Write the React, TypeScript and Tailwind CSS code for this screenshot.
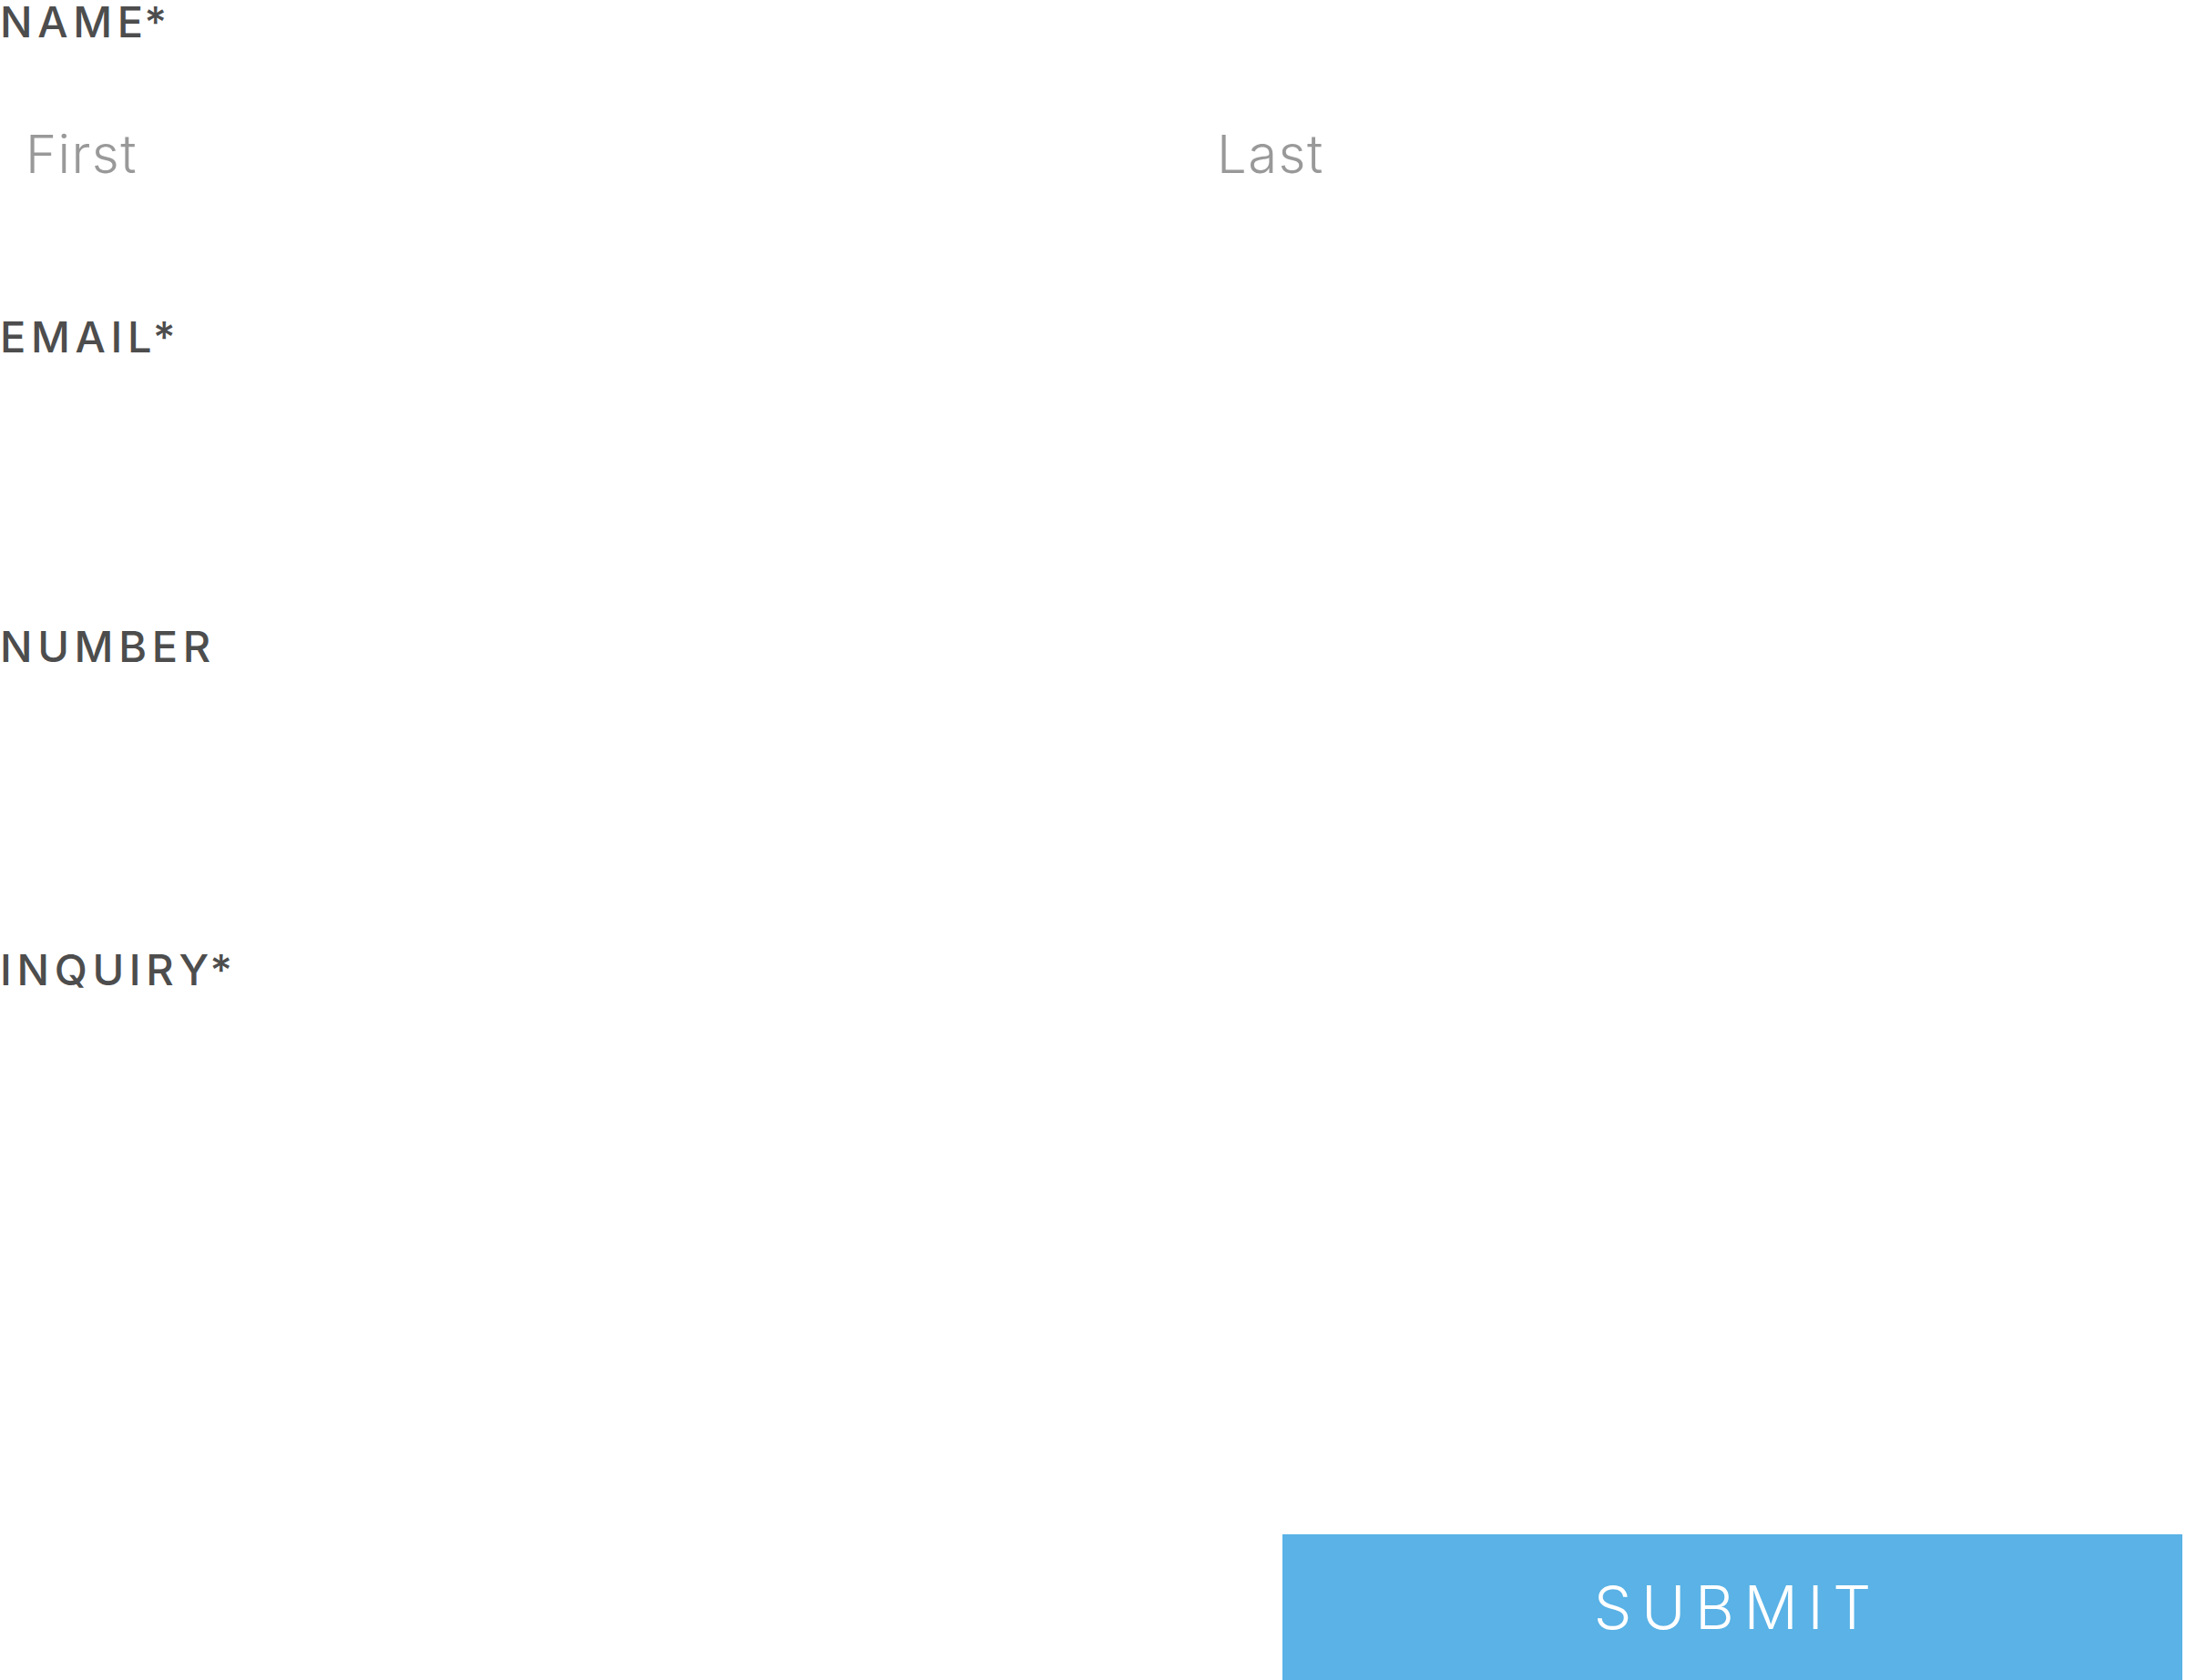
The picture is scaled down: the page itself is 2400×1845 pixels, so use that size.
import React from "react";

const labelCls =
  "block h-[47px] text-[47px] leading-[47px] font-medium tracking-[0.12em] text-[#4d4d4d] uppercase whitespace-nowrap";
const inputCls =
  "w-full bg-transparent outline-none border-0 pl-[28px] text-[58px] font-light text-[#555] placeholder:text-[#999] tracking-[0.025em]";

function Label({ text, required }: { text: string; required?: boolean }) {
  if (!required) return <label className={labelCls}>{text}</label>;
  const head = text.slice(0, -1);
  const last = text.slice(-1);
  return (
    <label className={labelCls}>
      {head}
      <span className="tracking-[0.03em]">{last}</span>*
    </label>
  );
}

export default function App() {
  return (
    <div
      className="w-[2400px] h-[1845px] bg-white overflow-hidden pr-[4px]"
      style={{ fontFamily: "Inter, 'Noto Sans', sans-serif" }}
    >
      <form className="flex flex-col" onSubmit={(e) => e.preventDefault()}>
        <div className="h-[346px] flex flex-col">
          <Label text="Name" required />
          <div className="mt-[53px] grid grid-cols-2 gap-x-[220px]">
            <input className={inputCls + " h-[138px]"} placeholder="First" />
            <input className={inputCls + " h-[138px]"} placeholder="Last" />
          </div>
        </div>
        <div className="h-[340px] flex flex-col">
          <Label text="Email" required />
          <input className={inputCls + " mt-[53px] h-[138px]"} />
        </div>
        <div className="h-[355px] flex flex-col">
          <Label text="Number" />
          <input className={inputCls + " mt-[53px] h-[138px]"} />
        </div>
        <div className="h-[644px] flex flex-col">
          <Label text="Inquiry" required />
          <textarea className={inputCls + " mt-[53px] h-[480px] resize-none"} />
        </div>
        <div className="flex justify-end">
          <button
            type="submit"
            className="w-[988px] h-[160px] bg-[#5ab2e6] text-white text-[66px] font-light tracking-[0.16em] pl-[0.16em] flex items-center justify-center"
          >
            SUBMIT
          </button>
        </div>
      </form>
    </div>
  );
}
